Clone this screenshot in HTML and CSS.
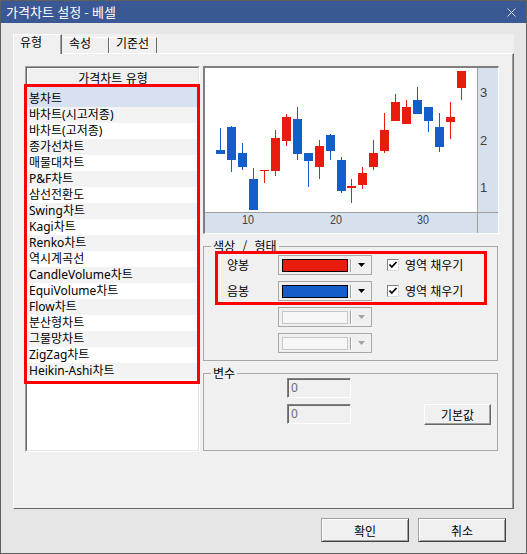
FILE: index.html
```html
<!DOCTYPE html>
<html lang="ko">
<head>
<meta charset="utf-8">
<title>가격차트 설정 - 베셀</title>
<link rel="stylesheet" href="styles.css">
</head>
<body>
<div class="window">
  <div class="titlebar">
    <span class="title">가격차트 설정 - 베셀</span>
    <svg class="close" width="9" height="9" viewBox="0 0 9 9"><path d="M0.5 0.5 L8.5 8.5 M8.5 0.5 L0.5 8.5" stroke="#d3dbea" stroke-width="1" fill="none"/></svg>
  </div>
  <div class="main">
    <div class="tabs">
      <div class="tab active tab-1">유형</div>
      <div class="tab tab-2">속성</div>
      <div class="tab tab-3">기준선</div>
    </div>
    <div class="panel">
      <div class="listbox">
        <div class="listbox-in">
          <div class="list-head">가격차트 유형</div>
          <ul class="items">
            <li class="sel">봉차트</li>
            <li>바차트(시고저종)</li>
            <li>바차트(고저종)</li>
            <li>종가선차트</li>
            <li>매물대차트</li>
            <li>P&amp;F차트</li>
            <li>삼선전환도</li>
            <li>Swing차트</li>
            <li>Kagi차트</li>
            <li>Renko차트</li>
            <li>역시계곡선</li>
            <li>CandleVolume차트</li>
            <li>EquiVolume차트</li>
            <li>Flow차트</li>
            <li>분산형차트</li>
            <li>그물망차트</li>
            <li>ZigZag차트</li>
            <li>Heikin-Ashi차트</li>
          </ul>
        </div>
        <div class="mark mark-list"></div>
      </div>
      <div class="right">
        <div class="chart">
          <svg class="chart-svg" width="293" height="165" viewBox="0 0 293 165">
            <rect x="0" y="0" width="293" height="165" fill="#d7e1ee"/>
            <rect x="0" y="0" width="272" height="144" fill="#ffffff"/>
            <rect x="272" y="0" width="1" height="165" fill="#a0a0a0"/>
            <rect x="0" y="144" width="293" height="1" fill="#a0a0a0"/>
            <g fill="#135ec8">
              <rect x="15" y="60" width="1" height="26"/><rect x="11" y="82" width="9" height="4"/>
              <rect x="26" y="58" width="1" height="46"/><rect x="22" y="59" width="9" height="33"/>
              <rect x="37" y="75" width="1" height="27"/><rect x="33" y="85" width="9" height="14"/>
              <rect x="48" y="100" width="1" height="42"/><rect x="44" y="111" width="9" height="31"/>
              <rect x="92" y="39" width="1" height="53"/><rect x="88" y="51" width="9" height="35"/>
              <rect x="103" y="85" width="1" height="34"/><rect x="99" y="85" width="9" height="8"/>
              <rect x="125" y="66" width="1" height="26"/><rect x="121" y="67" width="9" height="16"/>
              <rect x="136" y="89" width="1" height="36"/><rect x="132" y="92" width="9" height="31"/>
              <rect x="212" y="19" width="1" height="27"/><rect x="208" y="32" width="9" height="14"/>
              <rect x="223" y="39" width="1" height="25"/><rect x="219" y="39" width="9" height="14"/>
              <rect x="234" y="45" width="1" height="39"/><rect x="230" y="59" width="9" height="20"/>
            </g>
            <g fill="#e81c0c">
              <rect x="59" y="102" width="1" height="13"/><rect x="55" y="102" width="9" height="1"/>
              <rect x="70" y="62" width="1" height="46"/><rect x="66" y="70" width="9" height="33"/>
              <rect x="81" y="46" width="1" height="32"/><rect x="77" y="49" width="9" height="24"/>
              <rect x="114" y="72" width="1" height="39"/><rect x="110" y="78" width="9" height="21"/>
              <rect x="146" y="111" width="1" height="24"/><rect x="142" y="118" width="9" height="2"/>
              <rect x="157" y="99" width="1" height="22"/><rect x="153" y="105" width="9" height="12"/>
              <rect x="168" y="72" width="1" height="30"/><rect x="164" y="85" width="9" height="14"/>
              <rect x="179" y="45" width="1" height="40"/><rect x="175" y="62" width="9" height="21"/>
              <rect x="190" y="26" width="1" height="27"/><rect x="186" y="34" width="9" height="19"/>
              <rect x="201" y="32" width="1" height="24"/><rect x="197" y="39" width="9" height="17"/>
              <rect x="245" y="34" width="1" height="37"/><rect x="241" y="49" width="9" height="5"/>
              <rect x="256" y="3" width="1" height="29"/><rect x="252" y="3" width="9" height="17"/>
            </g>
            <g class="axis-text">
              <text x="275" y="29">3</text>
              <text x="275" y="77">2</text>
              <text x="275" y="124">1</text>
              <text x="37" y="156" textLength="12" lengthAdjust="spacingAndGlyphs">10</text>
              <text x="125" y="156" textLength="12" lengthAdjust="spacingAndGlyphs">20</text>
              <text x="212" y="156" textLength="12" lengthAdjust="spacingAndGlyphs">30</text>
            </g>
          </svg>
        </div>
        <fieldset class="group g-color">
          <legend>색상 / 형태</legend>
          <div class="group-body color-body">
            <div class="crow">
              <span class="clabel">양봉</span>
              <div class="combo"><span class="swatch sw-red"></span><span class="sep"></span><svg class="arrow" width="7" height="4" viewBox="0 0 7 4"><polygon points="0,0 7,0 3.5,4" fill="#000"/></svg></div>
              <span class="cb"><svg width="10" height="10" viewBox="0 0 10 10"><polyline points="1.5,4.5 3.8,7 8.5,2" fill="none" stroke="#000" stroke-width="1.8"/></svg></span>
              <span class="cb-label">영역 채우기</span>
            </div>
            <div class="crow">
              <span class="clabel">음봉</span>
              <div class="combo"><span class="swatch sw-blue"></span><span class="sep"></span><svg class="arrow" width="7" height="4" viewBox="0 0 7 4"><polygon points="0,0 7,0 3.5,4" fill="#000"/></svg></div>
              <span class="cb"><svg width="10" height="10" viewBox="0 0 10 10"><polyline points="1.5,4.5 3.8,7 8.5,2" fill="none" stroke="#000" stroke-width="1.8"/></svg></span>
              <span class="cb-label">영역 채우기</span>
            </div>
            <div class="crow">
              <span class="clabel"></span>
              <div class="combo disabled"><span class="swatch"></span><span class="sep"></span><svg class="arrow" width="7" height="4" viewBox="0 0 7 4"><polygon points="0,0 7,0 3.5,4" fill="#a3a3a3"/></svg></div>
            </div>
            <div class="crow">
              <span class="clabel"></span>
              <div class="combo disabled"><span class="swatch"></span><span class="sep"></span><svg class="arrow" width="7" height="4" viewBox="0 0 7 4"><polygon points="0,0 7,0 3.5,4" fill="#a3a3a3"/></svg></div>
            </div>
            <div class="mark mark-color"></div>
          </div>
        </fieldset>
        <fieldset class="group g-var">
          <legend>변수</legend>
          <div class="group-body var-body">
            <div class="vrow"><div class="inp">0</div></div>
            <div class="vrow"><div class="inp">0</div><button class="btn btn-default">기본값</button></div>
          </div>
        </fieldset>
      </div>
    </div>
    <div class="footer">
      <button class="btn btn-footer">확인</button>
      <button class="btn btn-footer">취소</button>
    </div>
  </div>
</div>
</body>
</html>
```

FILE: styles.css
```css
html, body {
  margin: 0;
  padding: 0;
  background: #e6e6e6;
}
body {
  font-family: "Noto Sans", "Noto Sans CJK KR", sans-serif;
  font-size: 12px;
  color: #000;
}
.window {
  width: 527px;
  height: 554px;
  box-sizing: border-box;
  border: 1px solid #5f5f5f;
  background: #e6e6e6;
  display: flex;
  flex-direction: column;
}
.titlebar {
  flex: none;
  height: 22px;
  background: #3a5894;
  color: #fff;
  display: flex;
  align-items: center;
  justify-content: space-between;
  padding: 0 10px 0 5px;
  font-size: 13px;
}
.title {
  line-height: 22px;
}
.close {
  display: block;
}
.main {
  padding: 11px 12px 0 12px;
}
.tabs {
  display: flex;
  align-items: flex-end;
  height: 19px;
  width: 501px;
  background: #f0f0f0;
}
.tab {
  box-sizing: border-box;
  height: 16px;
  padding-left: 6px;
  border-top: 1px solid #fff;
  border-left: 1px solid #fff;
  border-right: 1px solid #696969;
  line-height: 12px;
  background: #f0f0f0;
  white-space: nowrap;
}
.tab.active {
  height: 20px;
  margin-bottom: -1px;
  position: relative;
  z-index: 1;
  line-height: 15px;
  box-shadow: inset -1px 0 #a0a0a0;
}
.tab-1 { width: 49px; }
.tab-2 { width: 47px; border-left-color: #f0f0f0; }
.tab-3 { width: 48px; }
.panel {
  box-sizing: border-box;
  width: 501px;
  height: 456px;
  background: #f0f0f0;
  border-top: 1px solid #fff;
  border-left: 1px solid #fff;
  border-right: 1px solid #696969;
  border-bottom: 1px solid #696969;
  box-shadow: inset -1px 0 #a0a0a0;
  display: flex;
  align-items: flex-start;
  gap: 3px;
  padding: 12px 0 0 11px;
}
.listbox {
  position: relative;
  box-sizing: border-box;
  width: 175px;
  height: 386px;
  border: 1px solid;
  border-color: #a0a0a0 #fff #fff #a0a0a0;
  flex: none;
}
.listbox-in {
  box-sizing: border-box;
  height: 100%;
  border: 1px solid;
  border-color: #696969 #e3e3e3 #e3e3e3 #696969;
  background: #fff;
  overflow: hidden;
}
.list-head {
  height: 19px;
  box-sizing: border-box;
  background: #f0f0f0;
  border-top: 1px solid #fff;
  border-left: 1px solid #fff;
  text-align: center;
  line-height: 17px;
  font-family: "Noto Sans CJK KR", sans-serif;
}
.items {
  list-style: none;
  margin: 0;
  padding: 0;
}
.items li {
  height: 16px;
  line-height: 16px;
  padding-left: 2px;
  white-space: nowrap;
}
.items li:nth-child(even) {
  background: #f3f3f3;
}
.items li.sel {
  background: #d7e1f0;
  padding-top: 4px;
}
.mark {
  position: absolute;
  box-sizing: border-box;
  border: 3px solid #ff0000;
  pointer-events: none;
}
.mark-list {
  left: -2px;
  top: 17px;
  width: 176px;
  height: 300px;
}
.right {
  width: 296px;
  flex: none;
  display: flex;
  flex-direction: column;
}
.chart {
  box-sizing: border-box;
  height: 168px;
  border-top: 2px solid #7f7f7f;
  border-left: 2px solid #7f7f7f;
  border-right: 1px solid #fff;
  border-bottom: 1px solid #fff;
}
.chart-svg {
  display: block;
}
.axis-text text {
  font-family: "Liberation Sans", sans-serif;
  font-size: 13px;
  fill: #404040;
}
.group {
  margin: 7px 1px 0 0;
  padding: 0;
  border: 1px solid #a8a8a8;
  min-width: 0;
}
.group legend {
  padding: 0 2px;
  margin-left: 7px;
  line-height: 10px;
  word-spacing: 4px;
  font-family: "Noto Sans CJK KR", sans-serif;
}
.group-body {
  position: relative;
}
.color-body {
  display: flex;
  flex-direction: column;
  gap: 6px;
  padding: 4px 0 7px 23px;
}
.crow {
  display: flex;
  align-items: center;
  height: 20px;
}
.clabel {
  width: 51px;
  flex: none;
}
.combo {
  box-sizing: border-box;
  width: 94px;
  height: 20px;
  border: 1px solid #a8a8a8;
  display: flex;
  align-items: center;
  padding-left: 3px;
  background: #f0f0f0;
  flex: none;
}
.swatch {
  box-sizing: border-box;
  width: 66px;
  height: 13px;
  border: 1px solid #000;
}
.sw-red { background: #e81c0c; }
.sw-blue { background: #135ec8; }
.combo.disabled .swatch {
  border-color: #c8c8c8;
  background: #f7f7f7;
}
.sep {
  box-sizing: border-box;
  width: 2px;
  height: 13px;
  margin-left: 2px;
  border-left: 1px solid #a0a0a0;
  border-right: 1px solid #fff;
}
.arrow {
  display: block;
  margin-left: 6px;
}
.cb {
  box-sizing: border-box;
  width: 12px;
  height: 12px;
  margin-left: 15px;
  border: 1px solid;
  border-color: #808080 #dcdcdc #dcdcdc #808080;
  background: #fff;
  display: flex;
  align-items: center;
  justify-content: center;
}
.cb svg {
  display: block;
}
.cb-label {
  margin-left: 6px;
  white-space: nowrap;
}
.mark-color {
  left: 11px;
  top: 0;
  width: 272px;
  height: 54px;
}
.var-body {
  display: flex;
  flex-direction: column;
  gap: 6px;
  padding: 0 0 25px 83px;
}
.vrow {
  display: flex;
  align-items: flex-start;
}
.inp {
  box-sizing: border-box;
  width: 64px;
  height: 20px;
  border: 1px solid;
  border-color: #808080 #fff #fff #808080;
  box-shadow: inset 1px 1px #696969;
  background: #f0f0f0;
  color: #6d6d6d;
  padding-left: 3px;
  line-height: 17px;
}
.btn {
  box-sizing: border-box;
  border: 1px solid;
  border-color: #fff #696969 #696969 #fff;
  box-shadow: inset -1px -1px #a0a0a0;
  background: #f0f0f0;
  font-family: "Noto Sans CJK KR", sans-serif;
  font-size: 12px;
  color: #000;
  padding: 0;
  margin: 0;
}
.btn-default {
  width: 67px;
  height: 21px;
  margin-left: 73px;
}
.footer {
  display: flex;
  justify-content: flex-end;
  gap: 9px;
  padding: 9px 8px 0 0;
}
.btn-footer {
  width: 88px;
  height: 24px;
  border-color: #a0a0a0 #404040 #404040 #a0a0a0;
  box-shadow: inset 1px 1px #fff, inset -1px -1px #a0a0a0;
}
```
